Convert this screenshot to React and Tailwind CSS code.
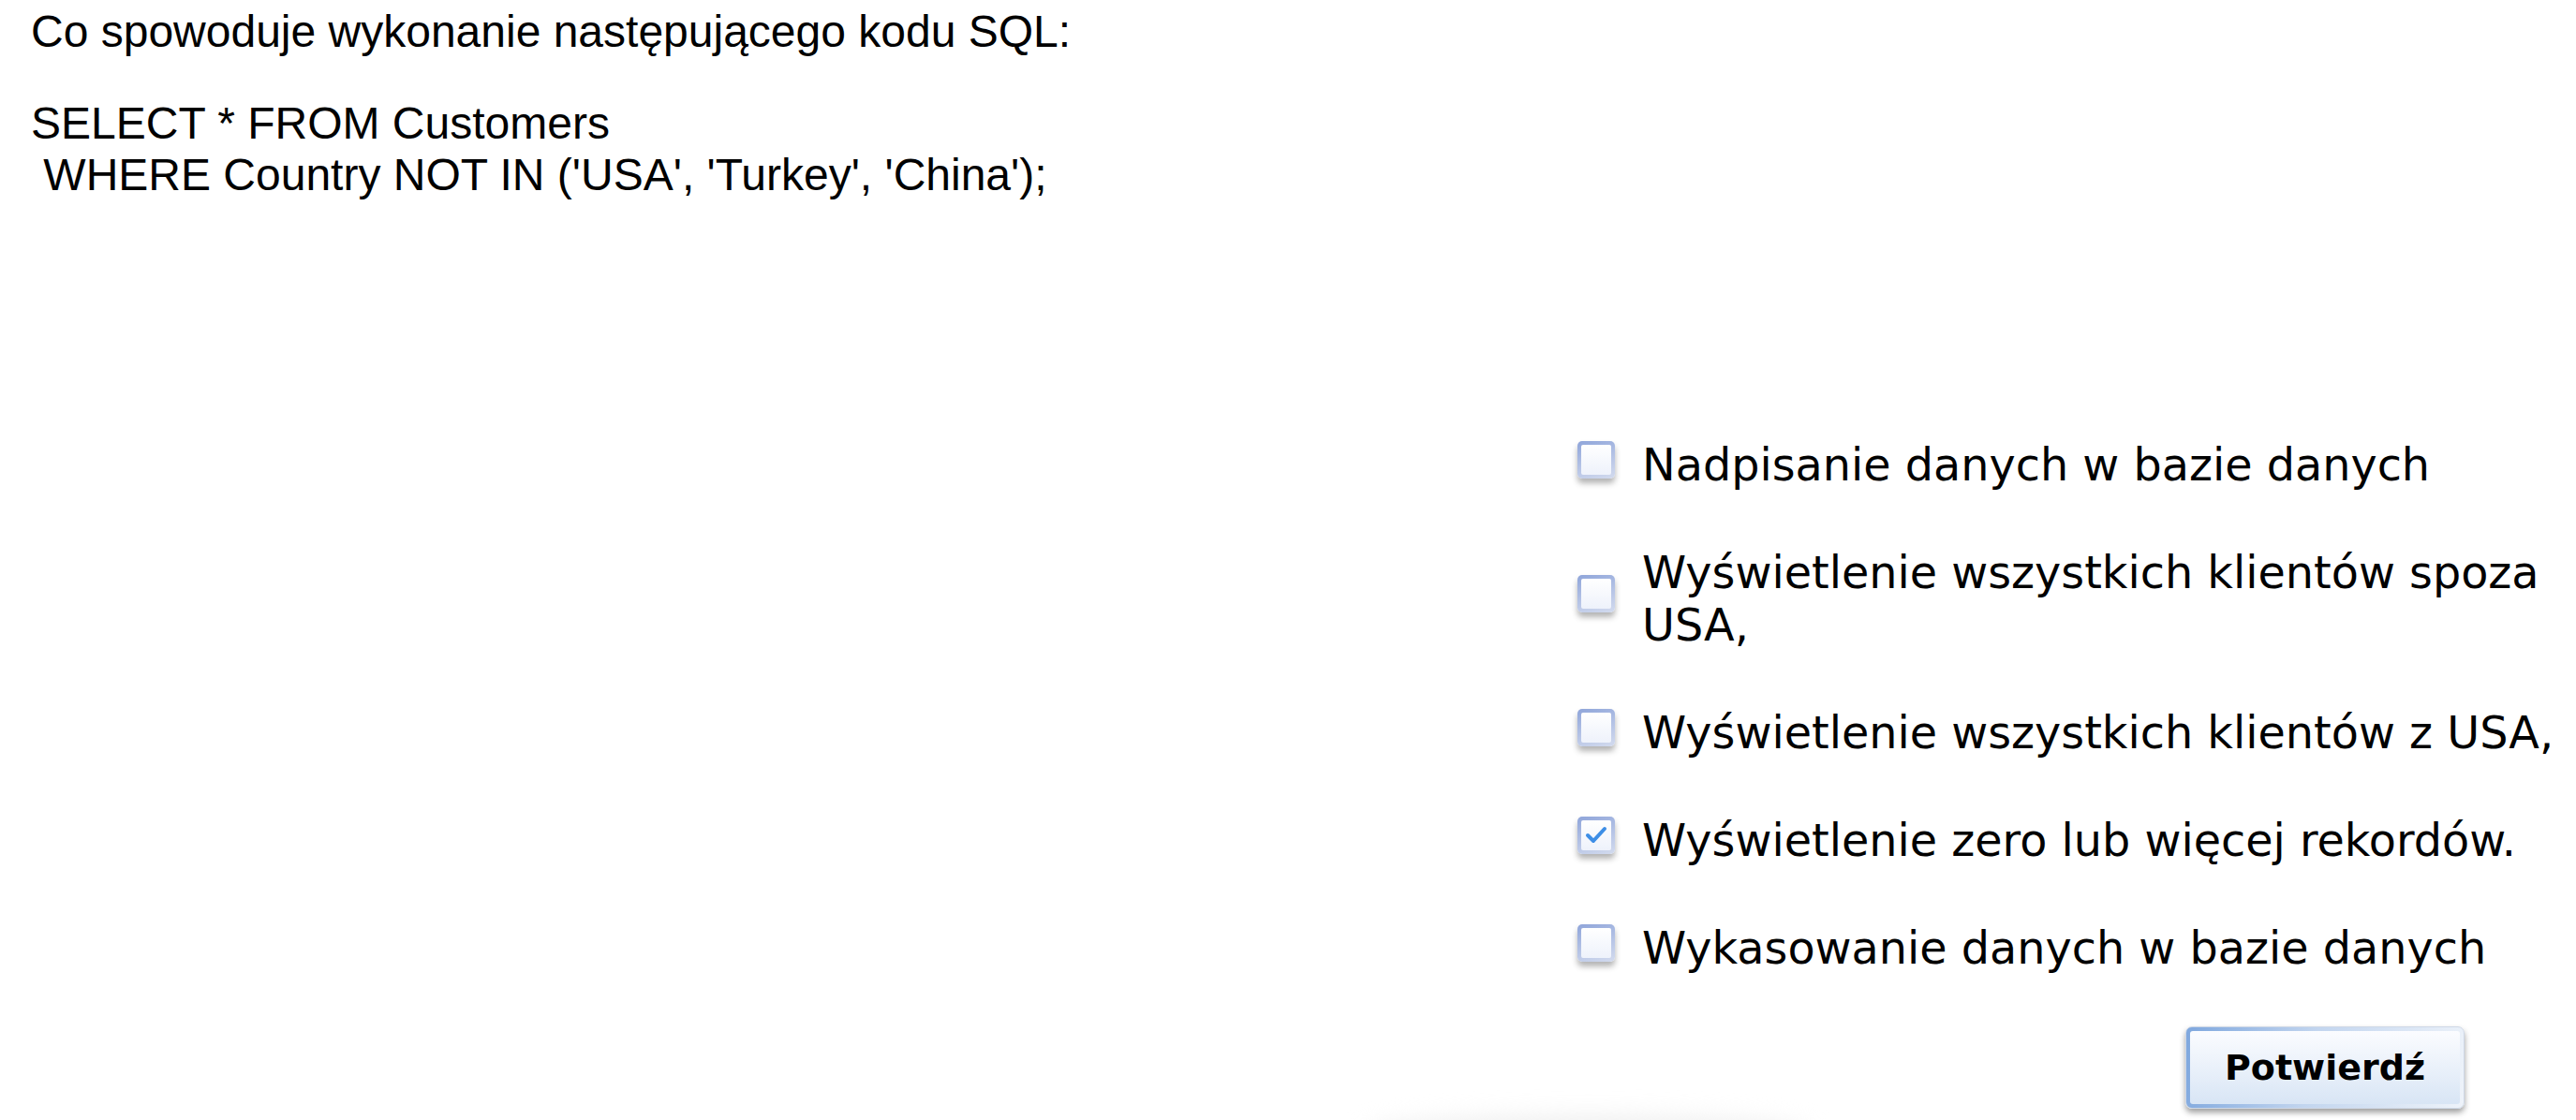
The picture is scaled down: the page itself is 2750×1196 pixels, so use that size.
const options = [
  { label: "Nadpisanie danych w bazie danych", checked: false },
  { label: "Wyświetlenie wszystkich klientów spoza USA,", checked: false },
  { label: "Wyświetlenie wszystkich klientów z USA,", checked: false },
  { label: "Wyświetlenie zero lub więcej rekordów.", checked: true },
  { label: "Wykasowanie danych w bazie danych", checked: false },
];

const CheckBox = ({ checked }) => {
  return (
    <div className="w-[40px] h-[40px] shrink-0 -ml-[2px] mb-[12px] rounded-[5px] p-[4px] bg-[linear-gradient(160deg,#8fa5da_0%,#b6c4e6_55%,#d3dbee_100%)] shadow-[0_5px_6px_rgba(0,0,0,0.3)]">
      <div className="w-full h-full rounded-[2px] bg-[linear-gradient(180deg,#ffffff_0%,#eef2fb_100%)] flex items-center justify-center">
        {checked && (
          <svg width="30" height="30" viewBox="0 0 30 30">
            <polyline points="6,15 12,21 24,8" fill="none" stroke="#3d8ee6" strokeWidth="4" strokeLinecap="round" strokeLinejoin="round" />
          </svg>
        )}
      </div>
    </div>
  );
};

const App = () => {
  return (
    <div className="w-[2750px] h-[1196px] bg-white overflow-hidden text-black">
      <div className="pl-[33px] pt-[6px] font-['Liberation_Sans',Arial,sans-serif] text-[48px] leading-[55px]">
        <p>Co spowoduje wykonanie następującego kodu SQL:</p>
        <p className="mt-[43px]">SELECT * FROM Customers</p>
        <p className="whitespace-pre"> WHERE Country NOT IN ('USA', 'Turkey', 'China');</p>
      </div>

      <div className="mt-[255px] ml-[1686px] w-[1064px] flex flex-col gap-[59px] font-['DejaVu_Sans',Verdana,sans-serif] text-[47.7px] leading-[56px]">
        {options.map((o) => (
          <div key={o.label} className="flex items-center gap-[29px]">
            <CheckBox checked={o.checked} />
            <span>{o.label}</span>
          </div>
        ))}
        <div className="pl-[647px] -mt-[4px]">
          <button className="w-[298px] h-[88px] rounded-[7px] p-[4px] bg-[linear-gradient(100deg,#7ea7de_0%,#c2d5ef_45%,#eef3fa_100%)] border border-[#cfd8e6] shadow-[0_4px_6px_rgba(0,0,0,0.38)]">
            <div className="w-full h-full rounded-[3px] bg-[linear-gradient(180deg,#fbfcff_0%,#eaf1fa_50%,#d8e5f5_100%)] flex items-center justify-center font-['DejaVu_Sans',Verdana,sans-serif] font-bold text-[38px]">
              Potwierdź
            </div>
          </button>
        </div>
      </div>

      <div className="ml-[1457px] mt-[8px] w-[477px] h-[40px] rounded-[50%] bg-[#efefef] blur-md"></div>
    </div>
  );
};

export default App;
